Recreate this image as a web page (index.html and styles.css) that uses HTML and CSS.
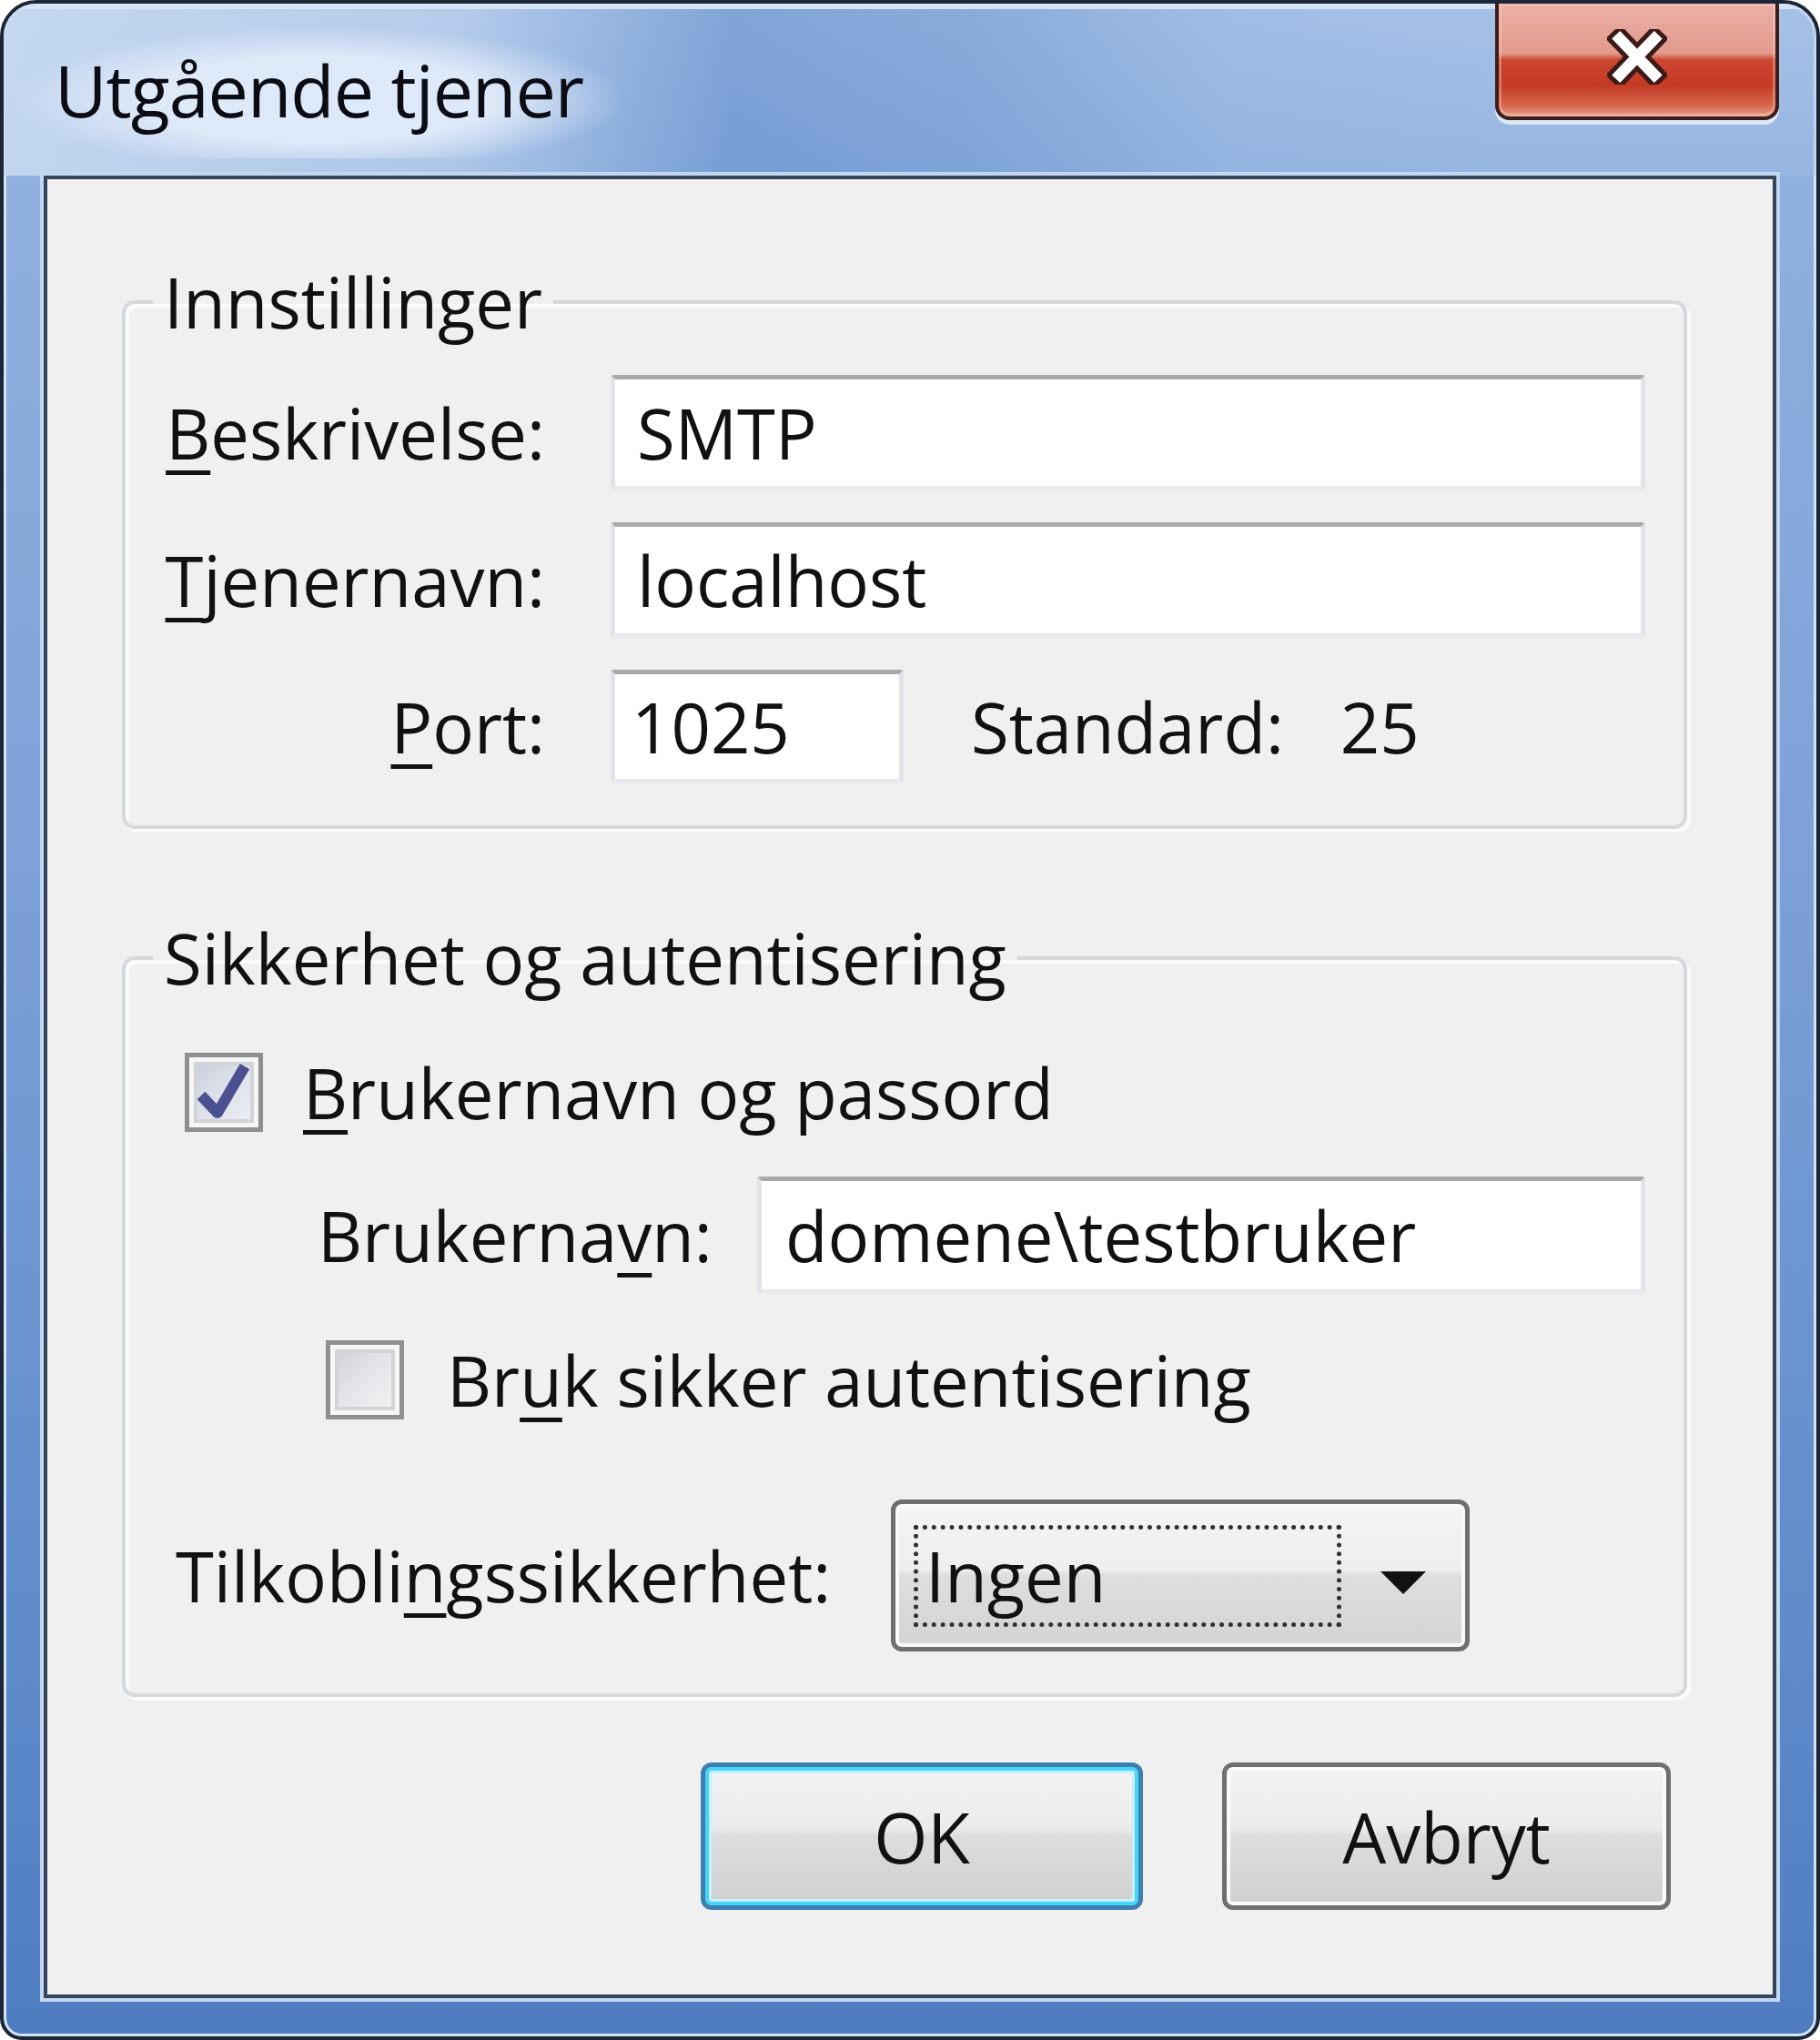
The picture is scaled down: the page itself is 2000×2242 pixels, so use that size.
FILE: index.html
```html
<!DOCTYPE html>
<html lang="no">
<head>
<meta charset="utf-8">
<title>Utgående tjener</title>
<link rel="stylesheet" href="styles.css">
</head>
<body>
<div class="window">
  <div class="titlebar">
    <div class="title">Utgående tjener</div>
    <div class="close">
      <svg viewBox="0 0 80 74" width="66" height="61">
        <path d="M17 13 L63 61 M63 13 L17 61" stroke="#3d1a18" stroke-width="27" stroke-linecap="square"/>
        <path d="M17 13 L63 61 M63 13 L17 61" stroke="#ffffff" stroke-width="15" stroke-linecap="square"/>
      </svg>
    </div>
  </div>
  <div class="client">
    <fieldset class="group g1">
      <legend>Innstillinger</legend>
      <div class="row r1">
        <div class="lbl right"><u>B</u>eskrivelse:</div>
        <div class="input long">SMTP</div>
      </div>
      <div class="row r2">
        <div class="lbl right"><u>T</u>jenernavn:</div>
        <div class="input long">localhost</div>
      </div>
      <div class="row r3">
        <div class="lbl right"><u>P</u>ort:</div>
        <div class="input port">1025</div>
        <div class="std">Standard:</div>
        <div class="stdval">25</div>
      </div>
    </fieldset>

    <fieldset class="group g2">
      <legend>Sikkerhet og autentisering</legend>
      <div class="row c1">
        <div class="check checked">
          <svg viewBox="0 0 75 75" width="75" height="75">
            <path d="M12 41 L30 60 L60 9" fill="none" stroke="#4b5190" stroke-width="12" stroke-linejoin="round"/>
          </svg>
        </div>
        <div class="clabel"><u>B</u>rukernavn og passord</div>
      </div>
      <div class="row c2">
        <div class="lbl user">Brukerna<u>v</u>n:</div>
        <div class="input userin">domene\testbruker</div>
      </div>
      <div class="row c3">
        <div class="check"></div>
        <div class="clabel">Br<u>u</u>k sikker autentisering</div>
      </div>
      <div class="row c4">
        <div class="lbl conn">Tilkobli<u>n</u>gssikkerhet:</div>
        <div class="select">
          <div class="focus">Ingen</div>
          <div class="arrow"></div>
        </div>
      </div>
    </fieldset>

    <div class="buttons">
      <div class="btn default">OK</div>
      <div class="btn">Avbryt</div>
    </div>
  </div>
</div>
</body>
</html>
```

FILE: styles.css
```css
html, body {
  margin: 0;
  padding: 0;
  background: #ffffff;
}

body {
  width: 2000px;
  height: 2242px;
  font-family: "Open Sans", "Noto Sans", sans-serif;
  color: #111111;
}

.window {
  box-sizing: border-box;
  width: 2000px;
  height: 2242px;
  border: 4px solid #1b2636;
  border-radius: 40px 40px 24px 24px;
  background:
    linear-gradient(to bottom, #a9c3e7 0px, #8fb0df 200px, #7ea2d8 900px, #5f8bca 1800px, #4e7cc0 2242px);
  box-shadow: inset 0 0 0 3px #d3e2f5;
  display: flex;
  flex-direction: column;
  overflow: hidden;
}

.titlebar {
  height: 189px;
  display: flex;
  align-items: flex-start;
  justify-content: space-between;
  background:
    linear-gradient(to right, rgba(200,218,241,0.9) 0px, rgba(190,210,238,0.6) 500px, rgba(100,145,205,0.6) 800px, rgba(105,148,206,0.5) 1050px, rgba(150,182,226,0.4) 1350px, rgba(160,190,230,0.3) 1634px);
  box-shadow: inset 0 6px 0 #d6e4f6;
}

.title {
  margin: 26px 0 0 16px;
  padding: 20px 40px 26px 40px;
  font-size: 79px;
  line-height: 98px;
  color: #0c0c14;
  letter-spacing: -1px;
  background: radial-gradient(ellipse at 50% 55%, rgba(226,236,250,0.9) 42%, rgba(220,232,248,0.0) 72%);
}

.close {
  width: 312px;
  height: 128px;
  margin: 0 41px 0 0;
  box-sizing: border-box;
  border: 4px solid #3d1c1a;
  border-top: none;
  border-radius: 0 0 16px 16px;
  background: linear-gradient(to bottom, #eab0a6 0%, #e39a8c 44%, #cc4530 50%, #c43a24 72%, #d6654c 90%, #e7a08c 100%);
  box-shadow: 0 5px 0 #dbe8f6, inset 0 0 0 3px rgba(255,210,200,0.35);
  display: flex;
  align-items: center;
  justify-content: center;
  padding-bottom: 8px;
}

.client {
  margin: 0 44px 0 44px;
  height: 2003px;
  box-sizing: border-box;
  border: 4px solid #34455c;
  background: #f0f0f0;
  box-shadow: 0 0 0 4px #c3d7f0;
  display: flex;
  flex-direction: column;
}

.group {
  box-sizing: border-box;
  width: 1720px;
  margin: 0 0 0 82px;
  padding: 0;
  border: 4px solid #d6d9dc;
  border-radius: 14px;
  box-shadow: 4px 4px 0 #fbfbfb, inset 4px 4px 0 #fbfbfb;
  min-width: 0;
}

.group legend {
  font-size: 76px;
  line-height: 100px;
  padding: 0 12px;
  margin-left: 30px;
  color: #111111;
}

.g1 {
  margin-top: 85px;
  padding: 30px 42px 46px 0;
}

.g2 {
  margin-top: 92px;
  padding: 54px 42px 46px 0;
}

.row {
  display: flex;
  align-items: center;
  font-size: 76px;
  line-height: 76px;
}

.lbl.right {
  width: 461px;
  text-align: right;
  flex: none;
}

.input {
  box-sizing: border-box;
  height: 127px;
  background: #ffffff;
  border-style: solid;
  border-width: 5px;
  border-color: #a7a9ae #e2e3ea #e6eaef #e2e3ea;
  border-radius: 4px;
  padding-left: 24px;
  display: flex;
  align-items: center;
  margin-left: 72px;
  white-space: nowrap;
}

.input.long { width: 1137px; }
.r2, .r3 { margin-top: 35px; }
.r3 .input { height: 125px; }
.input.port { width: 322px; padding-left: 18px; }
.std { margin-left: 74px; }
.stdval { margin-left: 62px; }

u {
  text-decoration: underline;
  text-decoration-thickness: 5px;
  text-underline-offset: 12px;
}

.check {
  box-sizing: border-box;
  width: 86px;
  height: 87px;
  flex: none;
  border: 5px solid #8e8f8f;
  background: linear-gradient(135deg, #c9cdd3 0%, #e2e4e7 45%, #f4f5f6 100%);
  box-shadow: inset 0 0 0 5px #f6f6f6, inset 0 0 0 9px #d2d4d7;
  display: flex;
  align-items: center;
  justify-content: center;
}

.check.checked {
  background: linear-gradient(135deg, #c4c9d8 0%, #dde0ea 45%, #eef0f4 100%);
}

.c1 { margin-left: 65px; }
.c1 .clabel { margin-left: 44px; }

.c2 { margin-top: 49px; }
.lbl.user { width: 483px; margin-left: 211px; flex: none; }
.input.userin { width: 976px; height: 129px; margin-left: 0; padding-left: 26px; }

.c3 { margin-top: 51px; margin-left: 220px; }
.c3 .clabel { margin-left: 47px; }

.c4 { margin-top: 88px; }
.lbl.conn { width: 786px; margin-left: 55px; flex: none; }

.select {
  box-sizing: border-box;
  width: 636px;
  height: 167px;
  border: 5px solid #6f6f6f;
  border-radius: 12px;
  background: linear-gradient(to bottom, #f5f5f5 0%, #eeeeee 46%, #dedede 50%, #d4d4d4 100%);
  box-shadow: inset 0 0 0 4px #fafafa;
  display: flex;
  align-items: center;
  padding-left: 20px;
}

.focus {
  box-sizing: border-box;
  width: 470px;
  height: 112px;
  border: 5px dotted #303030;
  display: flex;
  align-items: center;
  padding-left: 8px;
}

.arrow {
  width: 0;
  height: 0;
  margin-left: 43px;
  margin-top: 16px;
  border-left: 25px solid transparent;
  border-right: 25px solid transparent;
  border-top: 25px solid #111111;
}

.buttons {
  display: flex;
  justify-content: flex-end;
  gap: 87px;
  margin-top: 72px;
  padding-right: 112px;
}

.btn {
  box-sizing: border-box;
  width: 493px;
  height: 162px;
  border: 5px solid #707070;
  border-radius: 12px;
  background: linear-gradient(to bottom, #f3f3f3 0%, #ebebeb 45%, #dddddd 50%, #d0d0d0 100%);
  box-shadow: inset 0 0 0 4px #fbfbfb;
  font-size: 76px;
  display: flex;
  align-items: center;
  justify-content: center;
}

.btn.default {
  width: 486px;
  border-color: #3c7fb1;
  box-shadow: inset 0 0 0 4px #48d3f8, inset 0 0 0 7px #c5f1fd;
}
```
